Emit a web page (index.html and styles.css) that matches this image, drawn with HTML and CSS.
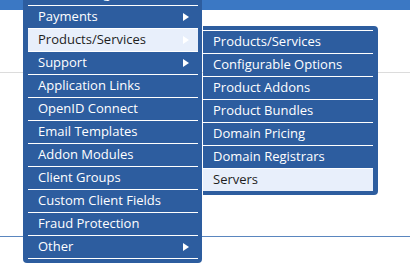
FILE: index.html
```html
<!DOCTYPE html>
<html lang="en">
<head>
  <meta charset="UTF-8">
  <title>Setup Menu</title>
  <link rel="stylesheet" href="styles.css">
</head>
<body>
  <div class="topbar"></div>
  <div class="page-head"></div>
  <div class="page-foot"></div>

  <ul class="menu">
    <li><a href="#" class="has-sub">Staff Management</a></li>
    <li><a href="#" class="has-sub">Payments</a></li>
    <li class="open">
      <a href="#" class="has-sub active">Products/Services</a>
      <ul class="submenu">
        <li><a href="#">Products/Services</a></li>
        <li><a href="#">Configurable Options</a></li>
        <li><a href="#">Product Addons</a></li>
        <li><a href="#">Product Bundles</a></li>
        <li><a href="#">Domain Pricing</a></li>
        <li><a href="#">Domain Registrars</a></li>
        <li><a href="#" class="active">Servers</a></li>
      </ul>
    </li>
    <li><a href="#" class="has-sub">Support</a></li>
    <li><a href="#">Application Links</a></li>
    <li><a href="#">OpenID Connect</a></li>
    <li><a href="#">Email Templates</a></li>
    <li><a href="#">Addon Modules</a></li>
    <li><a href="#">Client Groups</a></li>
    <li><a href="#">Custom Client Fields</a></li>
    <li><a href="#">Fraud Protection</a></li>
    <li class="last"><a href="#" class="has-sub">Other</a></li>
  </ul>
</body>
</html>
```

FILE: styles.css
```css
* {
  box-sizing: border-box;
}

body {
  margin: 0;
  font-family: 'Open Sans', 'Liberation Sans', sans-serif;
  font-size: 13px;
  background-color: #fff;
  color: #333;
  position: relative;
  height: 278px;
  overflow: hidden;
}

.topbar {
  height: 10px;
  background-color: #3b78c4;
}

.page-head {
  height: 63px;
  border-bottom: 1px solid #dcdcdc;
}

.page-foot {
  margin-top: 163px;
  border-top: 1px solid #5a86bf;
}

.menu,
.submenu {
  list-style: none;
  margin: 0;
  background-color: #2d5d9f;
}

.menu {
  position: absolute;
  top: -18px;
  left: 23px;
  width: 179px;
  padding: 0 4px 4px 5px;
  border-radius: 0 0 4px 4px;
  z-index: 2;
}

.menu li {
  position: relative;
  border-top: 1px solid #fff;
}

.menu li.last {
  border-bottom: 1px solid #fff;
}

.menu a {
  display: block;
  height: 22px;
  line-height: 20px;
  padding: 0 0 2px 10px;
  color: #fff;
  text-decoration: none;
  white-space: nowrap;
}

.menu a.active {
  background-color: #e8effb;
  color: #1e1e1e;
}

.has-sub::after {
  content: "";
  position: absolute;
  right: 9px;
  top: 7px;
  border-left: 6px solid #fff;
  border-top: 4px solid transparent;
  border-bottom: 4px solid transparent;
}

.submenu {
  position: absolute;
  top: -3px;
  left: 175px;
  width: 175px;
  padding: 4px 5px 4px 0;
  border-radius: 0 4px 4px 0;
}

.submenu li.active,
.submenu li:last-child {
  border-bottom: none;
}
```
